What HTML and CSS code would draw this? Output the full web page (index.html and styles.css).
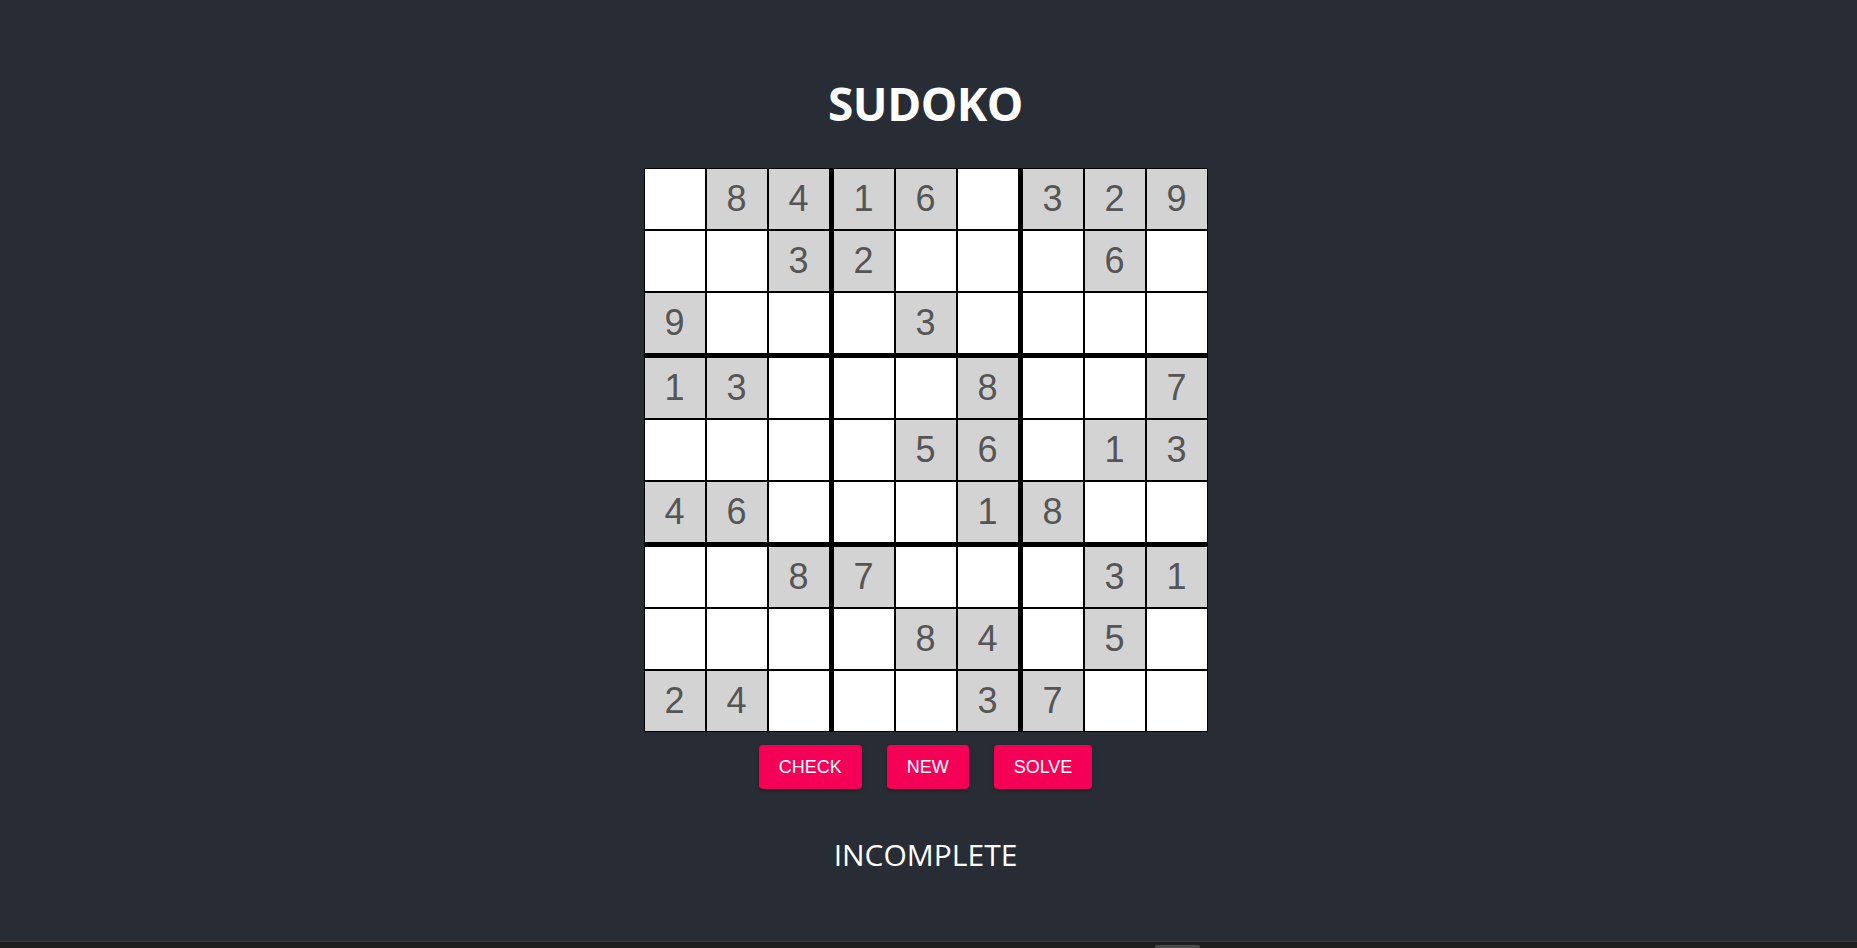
FILE: index.html
```html
<!DOCTYPE html>
<html lang="en">
<head>
<meta charset="utf-8">
<title>Sudoko</title>
<link rel="stylesheet" href="styles.css">
</head>
<body>
<div class="app">
  <h1 class="title">SUDOKO</h1>
  <div class="board">
    <div class="box">
      <div class="cell"></div><div class="cell given">8</div><div class="cell given">4</div>
      <div class="cell"></div><div class="cell"></div><div class="cell given">3</div>
      <div class="cell given">9</div><div class="cell"></div><div class="cell"></div>
    </div>
    <div class="box">
      <div class="cell given">1</div><div class="cell given">6</div><div class="cell"></div>
      <div class="cell given">2</div><div class="cell"></div><div class="cell"></div>
      <div class="cell"></div><div class="cell given">3</div><div class="cell"></div>
    </div>
    <div class="box">
      <div class="cell given">3</div><div class="cell given">2</div><div class="cell given">9</div>
      <div class="cell"></div><div class="cell given">6</div><div class="cell"></div>
      <div class="cell"></div><div class="cell"></div><div class="cell"></div>
    </div>
    <div class="box">
      <div class="cell given">1</div><div class="cell given">3</div><div class="cell"></div>
      <div class="cell"></div><div class="cell"></div><div class="cell"></div>
      <div class="cell given">4</div><div class="cell given">6</div><div class="cell"></div>
    </div>
    <div class="box">
      <div class="cell"></div><div class="cell"></div><div class="cell given">8</div>
      <div class="cell"></div><div class="cell given">5</div><div class="cell given">6</div>
      <div class="cell"></div><div class="cell"></div><div class="cell given">1</div>
    </div>
    <div class="box">
      <div class="cell"></div><div class="cell"></div><div class="cell given">7</div>
      <div class="cell"></div><div class="cell given">1</div><div class="cell given">3</div>
      <div class="cell given">8</div><div class="cell"></div><div class="cell"></div>
    </div>
    <div class="box">
      <div class="cell"></div><div class="cell"></div><div class="cell given">8</div>
      <div class="cell"></div><div class="cell"></div><div class="cell"></div>
      <div class="cell given">2</div><div class="cell given">4</div><div class="cell"></div>
    </div>
    <div class="box">
      <div class="cell given">7</div><div class="cell"></div><div class="cell"></div>
      <div class="cell"></div><div class="cell given">8</div><div class="cell given">4</div>
      <div class="cell"></div><div class="cell"></div><div class="cell given">3</div>
    </div>
    <div class="box">
      <div class="cell"></div><div class="cell given">3</div><div class="cell given">1</div>
      <div class="cell"></div><div class="cell given">5</div><div class="cell"></div>
      <div class="cell given">7</div><div class="cell"></div><div class="cell"></div>
    </div>
  </div>
  <div class="actions">
    <button class="btn">CHECK</button>
    <button class="btn">NEW</button>
    <button class="btn">SOLVE</button>
  </div>
  <p class="status">INCOMPLETE</p>
</div>
<div class="chrome-bar"><span class="chrome-thumb"></span></div>
</body>
</html>
```
FILE: styles.css
```css
html, body {
  margin: 0;
  padding: 0;
  background: #282c34;
  height: 100%;
}

body {
  font-family: "Open Sans", "Noto Sans", sans-serif;
  color: #fff;
  overflow: hidden;
}

.app {
  display: flex;
  flex-direction: column;
  align-items: center;
  padding: 72px 6px 0 0;
}

.title {
  margin: 0 0 34px;
  font-size: 46px;
  font-weight: 700;
  line-height: normal;
  letter-spacing: -0.5px;
}

.board {
  display: grid;
  grid-template-columns: repeat(3, auto);
  gap: 5px;
  padding: 1px 1px 0 1px;
  border-bottom: 1px solid #000;
  background: #000;
}

.box {
  display: grid;
  grid-template-columns: repeat(3, 60px);
  grid-auto-rows: 60px;
  gap: 2px;
}

.cell {
  background: #fff;
  display: flex;
  align-items: center;
  justify-content: center;
  font-family: "Liberation Sans", Arial, sans-serif;
  font-size: 36px;
  color: #555;
}

.cell.given {
  background: #d3d3d3;
}

.actions {
  display: flex;
  gap: 25px;
  margin-top: 13px;
}

.btn {
  height: 44px;
  padding: 0 20px;
  border: none;
  border-radius: 4px;
  background: #f50057;
  color: #fff;
  font-family: "Liberation Sans", Arial, sans-serif;
  font-size: 18px;
  box-shadow: 0 3px 1px -2px rgba(0,0,0,.2), 0 2px 2px 0 rgba(0,0,0,.14), 0 1px 5px 0 rgba(0,0,0,.12);
  cursor: pointer;
}

.status {
  margin: 45px 0 0;
  font-size: 30px;
  line-height: normal;
}

.chrome-bar {
  position: fixed;
  left: 0;
  right: 0;
  bottom: 0;
  height: 6px;
  background: #1f1f1f;
  border-top: 1px solid #3a3a3a;
}

.chrome-thumb {
  position: absolute;
  left: 1155px;
  bottom: 0;
  width: 45px;
  height: 3px;
  background: #4a4a4a;
  border-radius: 2px 2px 0 0;
}
```
